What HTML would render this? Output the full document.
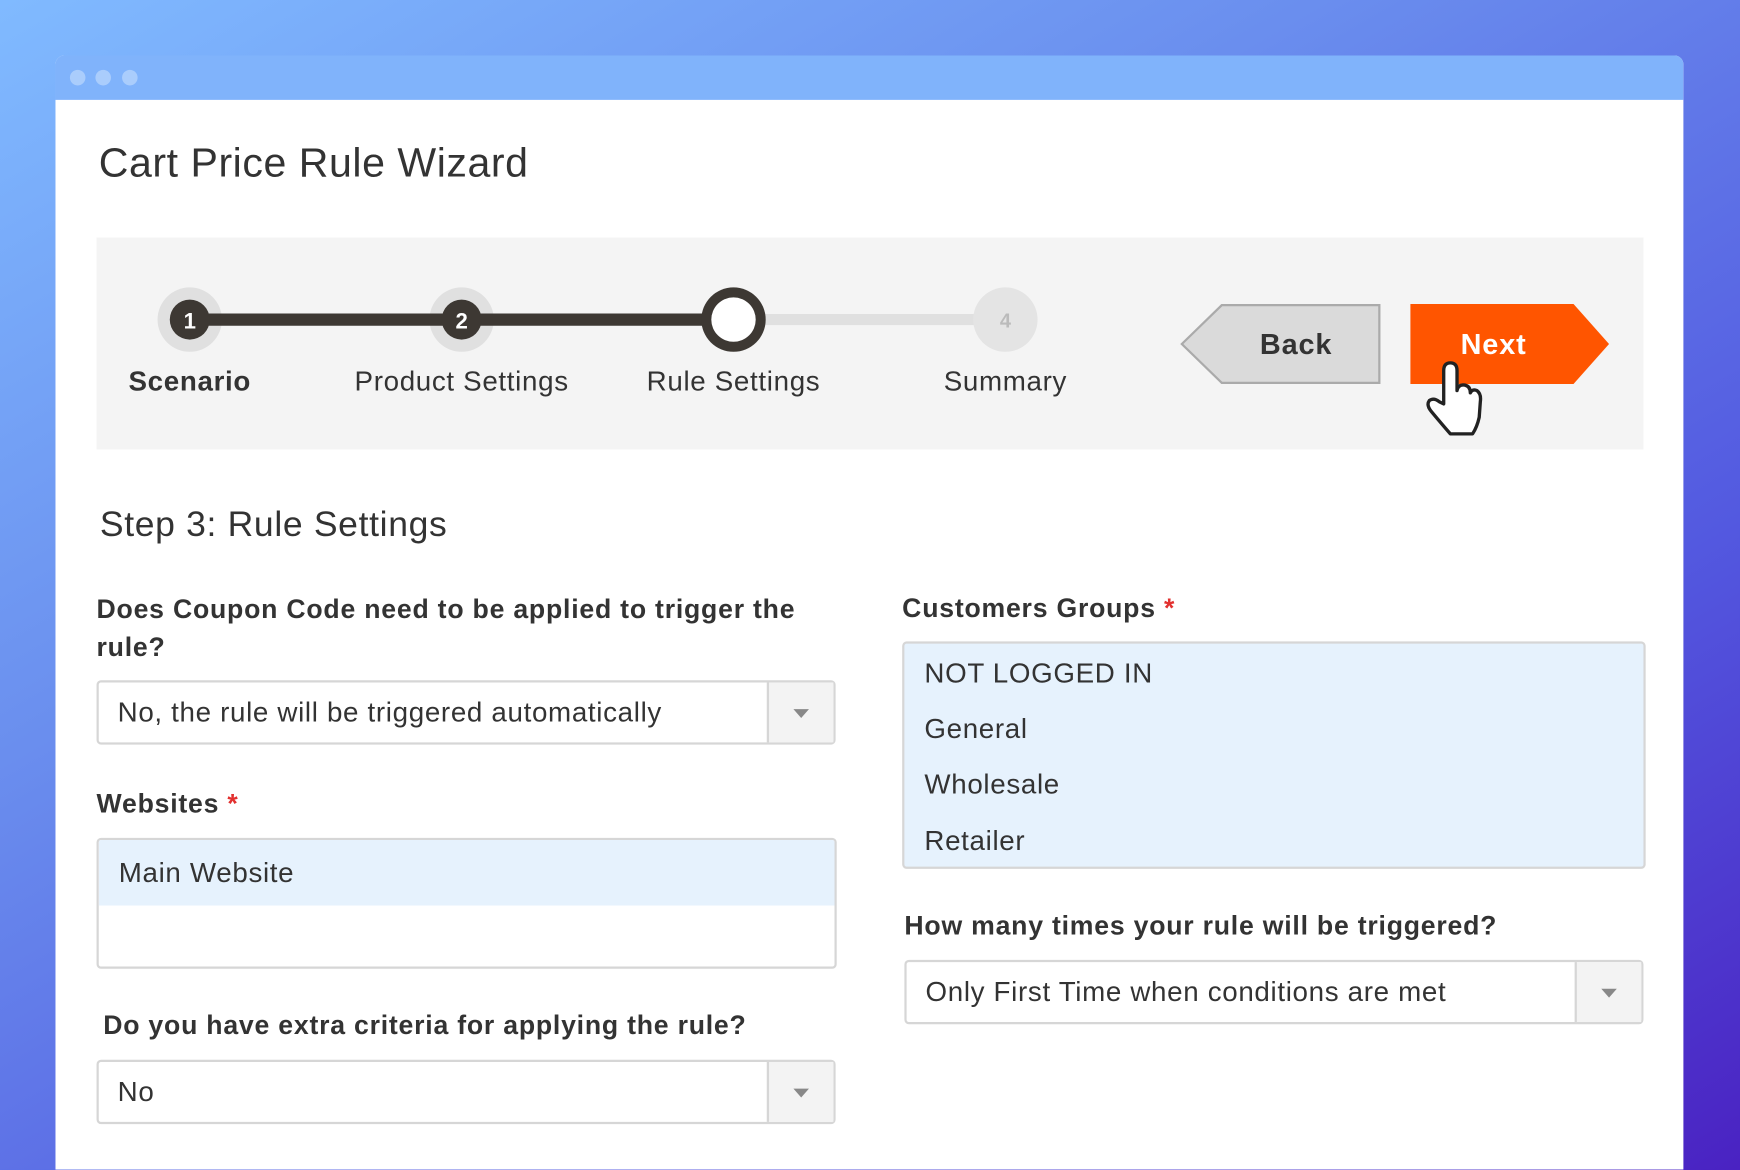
<!DOCTYPE html>
<html><head><meta charset="utf-8"><style>
html,body{margin:0;padding:0;width:1740px;height:1170px;overflow:hidden}
body{background:linear-gradient(150deg,#80baff 0%,#6a8eee 35%,#5359e0 70%,#4a22c2 100%)}
#w{position:absolute;left:0;top:0;width:1568px;height:1054px;overflow:hidden;transform:scale(1.10969);transform-origin:0 0;font-family:"Liberation Sans",sans-serif;color:#333;letter-spacing:0.6px;background:linear-gradient(150deg,#80baff 0%,#6a8eee 35%,#5359e0 70%,#4a22c2 100%)}
.a{position:absolute}
.win{left:50px;top:50px;width:1467px;height:1004px;background:#fff;border-radius:8px 8px 0 0;overflow:hidden}
.tb{left:0;top:0;width:100%;height:40px;background:#80b3fb}
.dot{width:14px;height:14px;border-radius:50%;background:#aacdfc;top:13px}
.lbl{font-size:24px;font-weight:bold;white-space:nowrap;letter-spacing:0.7px}
.star{color:#e2312f}
.sel{background:#fff;border:2px solid #d6d6d6;border-radius:4px;box-sizing:border-box}
.sel .t{position:absolute;left:17px;top:0;line-height:54px;font-size:25px}
.sel .dd{position:absolute;right:0;top:0;bottom:0;width:58px;background:#f3f3f3;border-left:2px solid #d6d6d6}
.sel .dd:after{content:"";position:absolute;left:22px;top:24px;border-left:7px solid transparent;border-right:7px solid transparent;border-top:8px solid #888}
.st{font-size:25px;white-space:nowrap;transform:translateX(-50%);top:330px}
</style></head><body><div id="w">
<div class="a win">
 <div class="a tb"></div>
 <div class="a dot" style="left:13px"></div><div class="a dot" style="left:36px"></div><div class="a dot" style="left:60px"></div>
</div>
<div class="a" style="left:89px;top:126px;font-size:37px;letter-spacing:0.5px">Cart Price Rule Wizard</div>
<div class="a" style="left:87px;top:214px;width:1394px;height:191px;background:#f4f4f4"></div>
<svg class="a" style="left:0;top:0;letter-spacing:0" width="1568" height="420">
 <line x1="661" y1="288" x2="906" y2="288" stroke="#e0e0e0" stroke-width="10"/>
 <circle cx="171" cy="288" r="29" fill="#e0e0e0"/>
 <circle cx="416" cy="288" r="29" fill="#e0e0e0"/>
 <circle cx="906" cy="288" r="29" fill="#e4e4e4"/>
 <line x1="171" y1="288" x2="661" y2="288" stroke="#3d3833" stroke-width="11"/>
 <circle cx="171" cy="288" r="18" fill="#3d3833"/>
 <circle cx="416" cy="288" r="18" fill="#3d3833"/>
 <circle cx="661" cy="288" r="29" fill="#3d3833"/>
 <circle cx="661" cy="288" r="20" fill="#fff"/>
 <text x="171" y="296" fill="#fff" font-size="20" font-weight="bold" text-anchor="middle" font-family="Liberation Sans">1</text>
 <text x="416" y="296" fill="#fff" font-size="20" font-weight="bold" text-anchor="middle" font-family="Liberation Sans">2</text>
 <text x="906" y="295" fill="#bbb" font-size="18" font-weight="bold" text-anchor="middle" font-family="Liberation Sans">4</text>
 <polygon points="1065,310 1101,275 1243,275 1243,345 1101,345" fill="#dadada" stroke="#aaa" stroke-width="2"/>
 <text x="1168" y="319" fill="#333" font-size="26" font-weight="bold" text-anchor="middle" font-family="Liberation Sans" letter-spacing="0.8">Back</text>
 <polygon points="1271,274 1418,274 1450,310 1418,346 1271,346" fill="#ff5500"/>
 <text x="1346" y="319" fill="#fff" font-size="26" font-weight="bold" text-anchor="middle" font-family="Liberation Sans" letter-spacing="0.8">Next</text>
 <path d="M1301,364 L1301,334 Q1301,327 1307,327 Q1313,327 1313,334 L1313,352 Q1314,346 1320,347 Q1325,348 1325,354 Q1327,350 1331,352 Q1335,355 1334,362 L1333,376 Q1331,385 1327,391 L1307,391 Q1300,383 1290,371 Q1285,365 1288,361 Q1292,358 1297,362 Z" fill="#fff" stroke="#222" stroke-width="3" stroke-linejoin="round"/>
</svg>
<div class="a st" style="left:171px;font-weight:bold">Scenario</div>
<div class="a st" style="left:416px">Product Settings</div>
<div class="a st" style="left:661px">Rule Settings</div>
<div class="a st" style="left:906px">Summary</div>

<div class="a" style="left:90px;top:454px;font-size:32px;letter-spacing:0.6px">Step 3: Rule Settings</div>
<div class="a lbl" style="left:87px;top:533px;line-height:34px;width:660px;white-space:normal">Does Coupon Code need to be applied to trigger the rule?</div>
<div class="a sel" style="left:87px;top:613px;width:666px;height:58px"><div class="t">No, the rule will be triggered automatically</div><div class="dd"></div></div>
<div class="a lbl" style="left:87px;top:711px">Websites <span class="star">*</span></div>
<div class="a sel" style="left:87px;top:755px;width:667px;height:118px;overflow:hidden"><div class="a" style="left:0;top:0;right:0;height:59px;background:#e6f2fd"></div><div class="t" style="left:18px;top:3px">Main Website</div></div>
<div class="a lbl" style="left:93px;top:911px">Do you have extra criteria for applying the rule?</div>
<div class="a sel" style="left:87px;top:955px;width:666px;height:58px"><div class="t">No</div><div class="dd"></div></div>

<div class="a lbl" style="left:813px;top:535px">Customers Groups <span class="star">*</span></div>
<div class="a sel" style="left:813px;top:578px;width:670px;height:205px;background:#e6f2fd;font-size:25px">
 <div class="a" style="left:18px;top:13px">NOT LOGGED IN</div>
 <div class="a" style="left:18px;top:63px">General</div>
 <div class="a" style="left:18px;top:113px">Wholesale</div>
 <div class="a" style="left:18px;top:164px">Retailer</div>
</div>
<div class="a lbl" style="left:815px;top:821px">How many times your rule will be triggered?</div>
<div class="a sel" style="left:815px;top:865px;width:666px;height:58px"><div class="t">Only First Time when conditions are met</div><div class="dd"></div></div>
</div></body></html>
